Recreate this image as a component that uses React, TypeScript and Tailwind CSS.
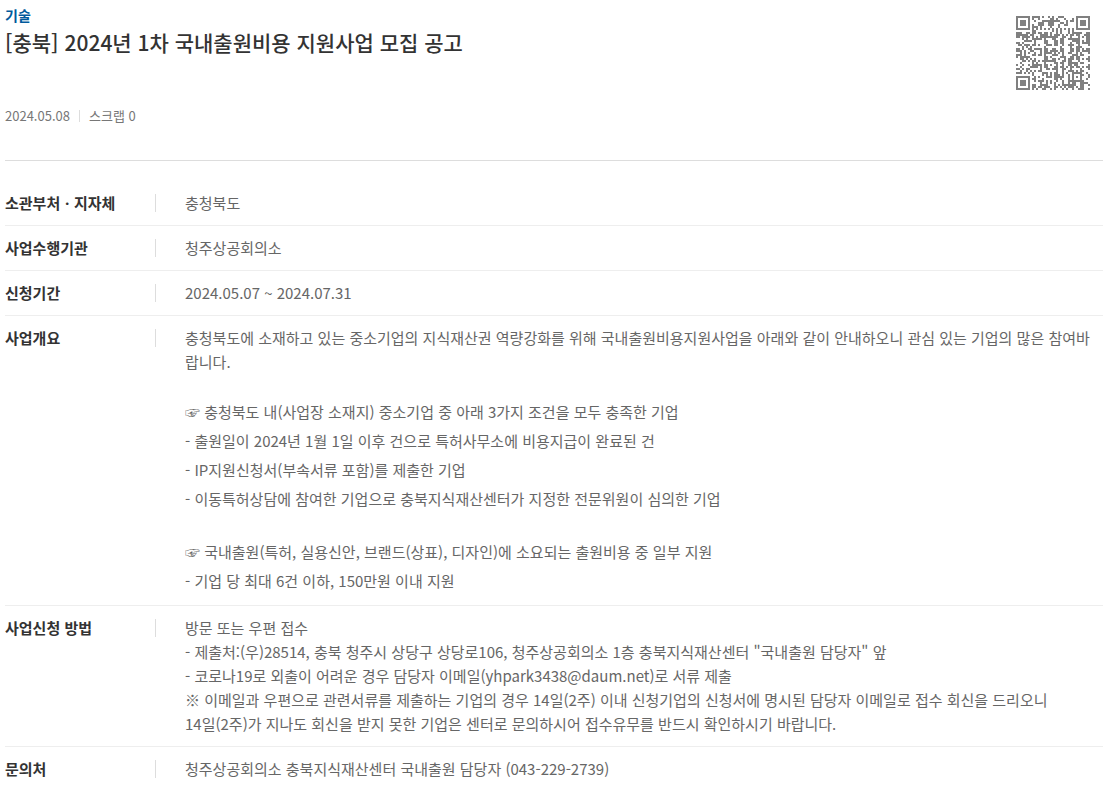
import type { ReactNode } from 'react';

const PAGE_URL = 'https://www.bizinfo.go.kr/web/lay1/bbs/S1T122C128/AS/74/view.do?pblancId=PBLN_000000000097316';

// QR version 5, level L
const SIZE = 37;
const DATA_WORDS = 108;
const EC_WORDS = 26;
const FORMAT_BITS = 0x72f3;

function multiply(a: number, b: number) {
    let z = 0;
    for (let i = 7; i >= 0; i--) {
        z = (z << 1) ^ ((z >>> 7) * 0x11d);
        z ^= ((b >>> i) & 1) * a;
    }
    return z;
}

function errorWords(data: number[]) {
    const gen: number[] = new Array(EC_WORDS).fill(0);
    gen[EC_WORDS - 1] = 1;
    let root = 1;
    for (let i = 0; i < EC_WORDS; i++) {
        for (let j = 0; j < EC_WORDS; j++) {
            gen[j] = multiply(gen[j], root);
            if (j + 1 < EC_WORDS) gen[j] ^= gen[j + 1];
        }
        root = multiply(root, 2);
    }
    const rest: number[] = new Array(EC_WORDS).fill(0);
    for (const b of data) {
        const factor = b ^ (rest.shift() as number);
        rest.push(0);
        gen.forEach((g, i) => (rest[i] ^= multiply(g, factor)));
    }
    return rest;
}

function buildQr(text: string) {
    let bits = '0100' + text.length.toString(2).padStart(8, '0');
    for (const c of text) bits += c.charCodeAt(0).toString(2).padStart(8, '0');
    bits += '0000';
    const words: number[] = [];
    for (let i = 0; i < bits.length; i += 8) words.push(parseInt(bits.slice(i, i + 8), 2));
    for (let pad = 0xec; words.length < DATA_WORDS; pad ^= 0xec ^ 0x11) words.push(pad);
    const all = words.concat(errorWords(words));

    const grid: boolean[][] = Array.from({ length: SIZE }, () => new Array(SIZE).fill(false));
    const fixed: boolean[][] = Array.from({ length: SIZE }, () => new Array(SIZE).fill(false));
    const put = (x: number, y: number, on: boolean) => {
        if (x < 0 || y < 0 || x >= SIZE || y >= SIZE) return;
        grid[y][x] = on;
        fixed[y][x] = true;
    };

    // Timing lines, then corners and the alignment mark
    for (let i = 0; i < SIZE; i++) {
        put(6, i, i % 2 === 0);
        put(i, 6, i % 2 === 0);
    }
    for (const [cx, cy] of [[3, 3], [SIZE - 4, 3], [3, SIZE - 4]]) {
        for (let dy = -4; dy <= 4; dy++) {
            for (let dx = -4; dx <= 4; dx++) {
                const d = Math.max(Math.abs(dx), Math.abs(dy));
                put(cx + dx, cy + dy, d !== 2 && d !== 4);
            }
        }
    }
    for (let dy = -2; dy <= 2; dy++) {
        for (let dx = -2; dx <= 2; dx++) put(30 + dx, 30 + dy, Math.max(Math.abs(dx), Math.abs(dy)) !== 1);
    }

    const bit = (i: number) => ((FORMAT_BITS >>> i) & 1) === 1;
    for (let i = 0; i <= 5; i++) put(8, i, bit(i));
    put(8, 7, bit(6));
    put(8, 8, bit(7));
    put(7, 8, bit(8));
    for (let i = 9; i < 15; i++) put(14 - i, 8, bit(i));
    for (let i = 0; i < 8; i++) put(SIZE - 1 - i, 8, bit(i));
    for (let i = 8; i < 15; i++) put(8, SIZE - 15 + i, bit(i));
    put(8, SIZE - 8, true);

    let n = 0;
    for (let right = SIZE - 1; right >= 1; right -= 2) {
        if (right === 6) right = 5;
        for (let v = 0; v < SIZE; v++) {
            for (let j = 0; j < 2; j++) {
                const x = right - j;
                const y = ((right + 1) & 2) === 0 ? SIZE - 1 - v : v;
                if (fixed[y][x]) continue;
                const on = n < all.length * 8 && ((all[n >>> 3] >>> (7 - (n & 7))) & 1) === 1;
                grid[y][x] = on !== (y % 2 === 0);
                n++;
            }
        }
    }
    return grid;
}

function QrCode() {
    return (
        <svg
            viewBox="0 0 37 37"
            className="size-[74px] shrink-0 fill-[#808080]"
            shapeRendering="crispEdges"
            aria-hidden="true"
        >
            {buildQr(PAGE_URL).map((row, y) =>
                row.map((on, x) => (on ? <rect key={`${x}-${y}`} x={x} y={y} width="1" height="1" /> : null))
            )}
        </svg>
    );
}

function InfoRow({ label, children }: { label: string; children: ReactNode }) {
    return (
        <div className="flex border-b border-[#eeeeee] py-2.5 last:border-b-0">
            <dt className="flex w-[151px] shrink-0 items-center justify-between self-start text-[15px] leading-6 font-bold text-[#333333]">
                {label}
                <span className="h-[18px] w-px bg-[#dddddd]" />
            </dt>
            <dd className="min-w-0 flex-1 pl-[29px] text-[15px] leading-6 text-[#666666]">{children}</dd>
        </div>
    );
}

export default function App() {
    return (
        <main
            className="bg-white pt-[5px] pr-1.5 pl-[5px] font-['Noto_Sans_CJK_KR','Noto_Sans_CJK_SC',sans-serif]"
            lang="ko"
        >
            <header className="flex items-start justify-between border-b border-[#dddddd] pr-[13px] pb-9">
                <div>
                    <p className="text-[14px] leading-5 font-bold text-[#005a9c]">기술</p>
                    <h1 className="text-[21px] leading-[34px] font-medium text-[#333333]">
                        [충북] 2024년 1차 국내출원비용 지원사업 모집 공고
                    </h1>
                    <div className="mt-[49px] flex items-center gap-[9px] text-[13px] leading-4 text-[#777777]">
                        <span>2024.05.08</span>
                        <span className="h-3 w-px bg-[#dddddd]" />
                        <span>스크랩 0</span>
                    </div>
                </div>
                <div className="pt-[11px]">
                    <QrCode />
                </div>
            </header>

            <dl className="pt-5">
                <InfoRow label="소관부처ㆍ지자체">충청북도</InfoRow>
                <InfoRow label="사업수행기관">청주상공회의소</InfoRow>
                <InfoRow label="신청기간">2024.05.07 ~ 2024.07.31</InfoRow>
                <InfoRow label="사업개요">
                    <p>
                        충청북도에 소재하고 있는 중소기업의 지식재산권 역량강화를 위해 국내출원비용지원사업을 아래와 같이 안내하오니 관심 있는 기업의 많은 참여바
                        <br />
                        랍니다.
                    </p>
                    <div className="mt-[23px] leading-[29px]">
                        <p>☞ 충청북도 내(사업장 소재지) 중소기업 중 아래 3가지 조건을 모두 충족한 기업</p>
                        <p>- 출원일이 2024년 1월 1일 이후 건으로 특허사무소에 비용지급이 완료된 건</p>
                        <p>- IP지원신청서(부속서류 포함)를 제출한 기업</p>
                        <p>- 이동특허상담에 참여한 기업으로 충북지식재산센터가 지정한 전문위원이 심의한 기업</p>
                    </div>
                    <div className="mt-6 leading-[29px]">
                        <p>☞ 국내출원(특허, 실용신안, 브랜드(상표), 디자인)에 소요되는 출원비용 중 일부 지원</p>
                        <p>- 기업 당 최대 6건 이하, 150만원 이내 지원</p>
                    </div>
                </InfoRow>
                <InfoRow label="사업신청 방법">
                    <p>방문 또는 우편 접수</p>
                    <p>- 제출처:(우)28514, 충북 청주시 상당구 상당로106, 청주상공회의소 1층 충북지식재산센터 "국내출원 담당자" 앞</p>
                    <p>- 코로나19로 외출이 어려운 경우 담당자 이메일(yhpark3438@daum.net)로 서류 제출</p>
                    <p>
                        ※ 이메일과 우편으로 관련서류를 제출하는 기업의 경우 14일(2주) 이내 신청기업의 신청서에 명시된 담당자 이메일로 접수 회신을 드리오니
                        <br />
                        14일(2주)가 지나도 회신을 받지 못한 기업은 센터로 문의하시어 접수유무를 반드시 확인하시기 바랍니다.
                    </p>
                </InfoRow>
                <InfoRow label="문의처">청주상공회의소 충북지식재산센터 국내출원 담당자 (043-229-2739)</InfoRow>
            </dl>
        </main>
    );
}
